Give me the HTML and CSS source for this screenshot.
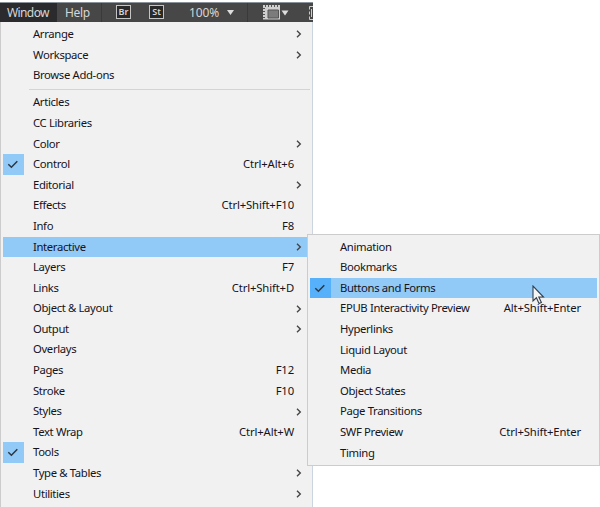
FILE: index.html
```html
<!DOCTYPE html>
<html lang="en">
<head>
<meta charset="utf-8">
<title>Window menu</title>
<link rel="stylesheet" href="styles.css">
</head>
<body>
<svg width="0" height="0" class="defs">
  <symbol id="arrow" viewBox="0 0 6 8"><path d="M1 .8 4.3 4 1 7.2" fill="none" stroke="#444" stroke-width="1.35"/></symbol>
  <symbol id="check" viewBox="0 0 12 9"><path d="M1.3 4.2 4.4 7.2 10.3 1.2" fill="none" stroke="#2b3743" stroke-width="1.5"/></symbol>
</svg>
<div class="app">
  <header class="bar">
    <span class="tab active">Window</span>
    <span class="tab help">Help</span>
    <span class="badge">Br</span>
    <span class="badge st">St</span>
    <span class="zoom">100%</span>
    <svg class="caret" width="7" height="5"><path d="M0 0h7L3.5 5z" fill="#ddd"/></svg>
    <svg class="tools" width="44" height="20" viewBox="0 0 44 20">
      <path d="M.5 0v20" stroke="#3a3a3a"/>
      <path d="M16 2h17v14.500H16z" fill="#cfcfcf"/>
      <path d="M18 3h15" stroke="#555" stroke-width="2" stroke-dasharray="1 2"/>
      <path d="M17 5v11" stroke="#555" stroke-width="2" stroke-dasharray="1 2"/>
      <path d="M21 7h10.500v8H21z" fill="#7c7c7c" stroke="#555"/>
      <path d="M34.500 7.500h7l-3.500 5z" fill="#ddd"/>
    </svg>
    <svg class="edge" width="5" height="16"><path d="M5 1.500H1.500v3M1.500 6.500v3M1.500 11.500v3H5" fill="none" stroke="#ccc"/><path d="M3.500 4v8" stroke="#ccc"/></svg>
  </header>
  <ul class="menu main">
    <li>Arrange<svg class="arrow"><use href="#arrow"/></svg></li>
    <li>Workspace<svg class="arrow"><use href="#arrow"/></svg></li>
    <li>Browse Add-ons</li>
    <li class="rule"></li>
    <li>Articles</li>
    <li>CC Libraries</li>
    <li>Color<svg class="arrow"><use href="#arrow"/></svg></li>
    <li><span class="tick"><svg><use href="#check"/></svg></span>Control<kbd>Ctrl+Alt+6</kbd></li>
    <li>Editorial<svg class="arrow"><use href="#arrow"/></svg></li>
    <li>Effects<kbd>Ctrl+Shift+F10</kbd></li>
    <li>Info<kbd>F8</kbd></li>
    <li class="on">Interactive<svg class="arrow"><use href="#arrow"/></svg></li>
    <li>Layers<kbd>F7</kbd></li>
    <li>Links<kbd>Ctrl+Shift+D</kbd></li>
    <li>Object &amp; Layout<svg class="arrow"><use href="#arrow"/></svg></li>
    <li>Output<svg class="arrow"><use href="#arrow"/></svg></li>
    <li>Overlays</li>
    <li>Pages<kbd>F12</kbd></li>
    <li>Stroke<kbd>F10</kbd></li>
    <li>Styles<svg class="arrow"><use href="#arrow"/></svg></li>
    <li>Text Wrap<kbd>Ctrl+Alt+W</kbd></li>
    <li><span class="tick"><svg><use href="#check"/></svg></span>Tools</li>
    <li>Type &amp; Tables<svg class="arrow"><use href="#arrow"/></svg></li>
    <li>Utilities<svg class="arrow"><use href="#arrow"/></svg></li>
  </ul>
  <ul class="menu sub">
    <li>Animation</li>
    <li>Bookmarks</li>
    <li class="on"><span class="tick"><svg><use href="#check"/></svg></span>Buttons and Forms</li>
    <li>EPUB Interactivity Preview<kbd>Alt+Shift+Enter</kbd></li>
    <li>Hyperlinks</li>
    <li>Liquid Layout</li>
    <li>Media</li>
    <li>Object States</li>
    <li>Page Transitions</li>
    <li>SWF Preview<kbd>Ctrl+Shift+Enter</kbd></li>
    <li>Timing</li>
  </ul>
  <svg class="pointer" width="13" height="20" viewBox="0 0 13 20"><path d="M1 1v15l3.400-3.200 2.600 5.700 2.400-1.100-2.600-5.400h4.700z" fill="#f5f5f5" stroke="#34404c" stroke-width="1.100"/></svg>
</div>
</body>
</html>
```
FILE: styles.css
```css
* { box-sizing: border-box; }
body { margin: 0; background: #fff; }
.defs { position: absolute; }
.app {
  position: relative;
  width: 600px;
  height: 507px;
  overflow: hidden;
  padding-top: 2px;
  font: 11.3px/20.6px "Noto Sans", "Open Sans", sans-serif;
  letter-spacing: -.35px;
  color: #15131c;
}
.bar {
  display: flex;
  align-items: center;
  width: 313px;
  height: 20px;
  background: #474747;
  border-top: 1px solid #8b9198;
  color: #d6d6d6;
  font-size: 12px;
  line-height: 20px;
  overflow: hidden;
}
.tab { flex: none; height: 19px; }
.active { width: 57px; padding-left: 7px; background: #2b2b2d; letter-spacing: -.6px; }
.help { width: 45px; padding-left: 8px; border-right: 1px solid #3a3a3a; }
.badge {
  flex: none;
  width: 15px;
  height: 14px;
  margin: 0 0 1px 14px;
  border: 1px solid #c4c4c4;
  background: #292929;
  font-size: 9px;
  font-weight: 600;
  line-height: 12px;
  text-align: center;
  letter-spacing: 0;
}
.st { margin-left: 18px; }
.zoom { width: 31px; margin-left: 25px; letter-spacing: -.1px; }
.caret { flex: none; margin-left: 7px; }
.tools { flex: none; margin-left: 13px; }
.edge { flex: none; margin-left: 17px; }
.menu { margin: 0; list-style: none; background: #f1f1f1; }
.main {
  width: 313px;
  height: 485px;
  padding: 2.200px 2px 0;
  border-left: 1px solid #ccc;
  border-right: 1px solid #cbd5df;
}
.menu li {
  position: relative;
  display: flex;
  align-items: center;
  height: 20.6px;
  padding: 0 16px 0 30px;
  white-space: pre;
}
.menu .rule {
  height: 6.400px;
  margin-left: 26px;
  padding: 0;
}
.rule::after { content: ""; width: 100%; height: 1px; background: #d4d4d4; }
.menu kbd { margin-left: auto; font: inherit; letter-spacing: -.15px; }
.arrow { width: 6px; height: 8px; margin: 0 -8px 0 auto; }
.menu .on { background: #91c9f7; }
.tick {
  position: absolute;
  left: 0;
  top: 0;
  display: flex;
  align-items: center;
  justify-content: center;
  width: 20.6px;
  height: 20.6px;
  background: #91c9f7;
}
.tick svg { width: 12px; height: 9px; }
.on .tick { background: #56b0fa; }
.sub {
  position: absolute;
  left: 307px;
  top: 234px;
  width: 293px;
  height: 232px;
  padding: 1.700px 2px 0;
  border: 1px solid #ccc;
}
.pointer { position: absolute; left: 532px; top: 285px; }
```
